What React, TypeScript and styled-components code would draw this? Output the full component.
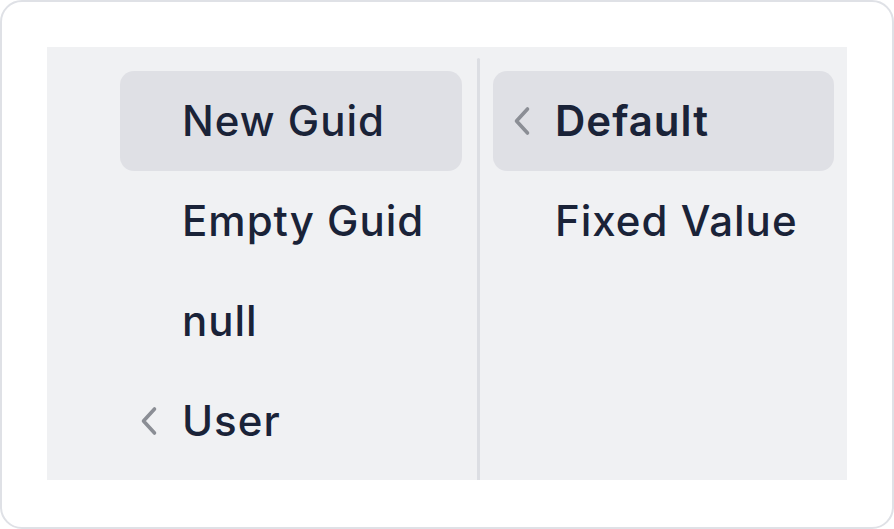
import React from "react";
import styled, { createGlobalStyle } from "styled-components";

const Global = createGlobalStyle`
  html, body { margin: 0; padding: 0; background: #ffffff; }
  body { font-family: Inter, "Noto Sans", sans-serif; }
`;

const Card = styled.div`
  box-sizing: border-box;
  width: 894px;
  height: 529px;
  background: #ffffff;
  border: 2px solid #dfe1e6;
  border-radius: 22px;
  padding: 45px 45px 47px 45px;
`;

const Panel = styled.div`
  display: flex;
  width: 800px;
  height: 433px;
  background: #f0f1f3;
`;

const Column = styled.div<{ $padLeft: number; $padRight: number }>`
  box-sizing: border-box;
  display: flex;
  flex-direction: column;
  padding: 24px ${(p) => p.$padRight}px 0 ${(p) => p.$padLeft}px;
`;

const LeftColumn = styled(Column)`
  width: 430px;
`;

const RightColumn = styled(Column)`
  flex: 1;
`;

const Divider = styled.div`
  width: 3px;
  margin-top: 11px;
  background: #dcdee3;
  border-radius: 2px 2px 0 0;
`;

const Item = styled.div<{ $active?: boolean }>`
  position: relative;
  height: 100px;
  display: flex;
  align-items: center;
  padding-left: 62px;
  border-radius: 14px;
  background: ${(p) => (p.$active ? "#dfe0e5" : "transparent")};
`;

const Label = styled.span<{ $bold?: boolean }>`
  font-family: Inter, "Noto Sans", sans-serif;
  font-size: 42px;
  font-optical-sizing: none;
  font-variation-settings: "opsz" 14;
  font-weight: ${(p) => (p.$bold ? 600 : 500)};
  color: #1a2338;
  letter-spacing: 1px;
  line-height: 1;
`;

const Chevron = styled.svg`
  position: absolute;
  left: 20px;
  top: 50%;
  transform: translateY(-50%);
  width: 18px;
  height: 29px;
`;

const ChevronIcon = () => (
  <Chevron viewBox="0 0 18 29" fill="none">
    <path
      d="M14.5 2.5 L3.5 14.5 L14.5 26.5"
      stroke="#8b8e95"
      strokeWidth="3.6"
      strokeLinecap="round"
      strokeLinejoin="round"
    />
  </Chevron>
);

type Entry = { label: string; active?: boolean; sub?: boolean; bold?: boolean };

const left: Entry[] = [
  { label: "New Guid", active: true },
  { label: "Empty Guid" },
  { label: "null" },
  { label: "User", sub: true },
];

const right: Entry[] = [
  { label: "Default", active: true, sub: true, bold: true },
  { label: "Fixed Value" },
];

const renderItems = (items: Entry[]) =>
  items.map((e) => (
    <Item key={e.label} $active={e.active}>
      {e.sub && <ChevronIcon />}
      <Label $bold={e.bold}>{e.label}</Label>
    </Item>
  ));

export default function App() {
  return (
    <>
      <Global />
      <Card>
        <Panel>
          <LeftColumn $padLeft={73} $padRight={15}>
            {renderItems(left)}
          </LeftColumn>
          <Divider />
          <RightColumn $padLeft={13} $padRight={13}>
            {renderItems(right)}
          </RightColumn>
        </Panel>
      </Card>
    </>
  );
}
